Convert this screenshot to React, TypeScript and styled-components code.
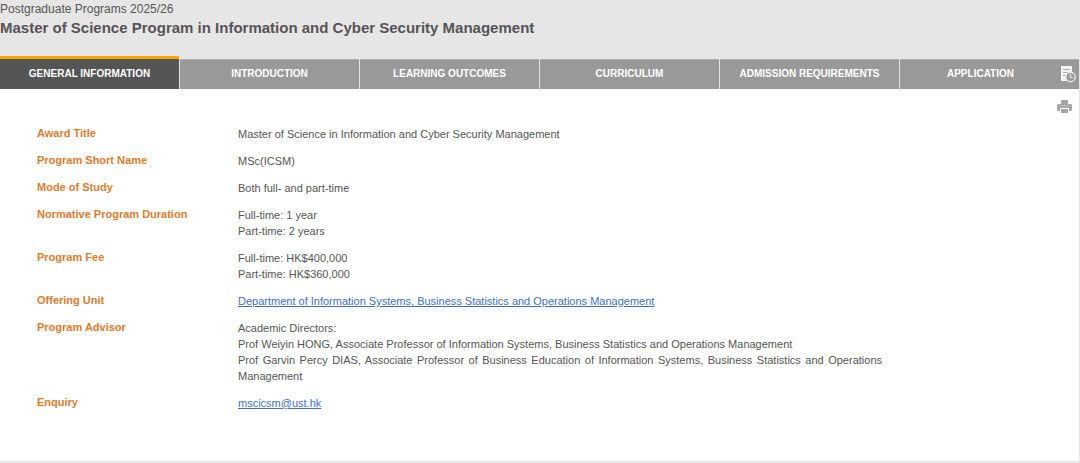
import React from "react";
import styled, { createGlobalStyle } from "styled-components";

const GlobalStyle = createGlobalStyle`
  * { box-sizing: border-box; }
  body {
    margin: 0;
    background: #e6e6e6;
    color: #555;
    font-family: "Liberation Sans", Arial, sans-serif;
    font-size: 11px;
    line-height: 16px;
  }
`;

const Header = styled.header`
  padding-bottom: 18px;
`;

const Kicker = styled.p`
  margin: 0;
  font-size: 12px;
  line-height: 18px;
`;

const Title = styled.h1`
  margin: 0;
  font-size: 15px;
  line-height: 20px;
`;

const TabBar = styled.nav`
  display: grid;
  grid-template-columns: repeat(6, 1fr);
  column-gap: 1px;
  padding-right: 1px;
`;

const Tab = styled.a<{ $active?: boolean; $withTool?: boolean }>`
  position: relative;
  display: flex;
  align-items: center;
  justify-content: center;
  height: 33px;
  padding-right: ${(p) => (p.$withTool ? "18px" : "0")};
  border-top: 3px solid ${(p) => (p.$active ? "#ffa500" : "transparent")};
  background: ${(p) => (p.$active ? "#555" : "#999")};
  background-clip: padding-box;
  box-shadow: ${(p) => (p.$active ? "none" : "inset 0 1px 0 #adadad")};
  color: #fff;
  font-size: 10px;
  font-weight: bold;
  text-decoration: none;
  text-transform: uppercase;

  &::after {
    content: "";
    display: ${(p) => (p.$active ? "block" : "none")};
    position: absolute;
    top: 100%;
    left: 50%;
    margin-left: -7px;
    border: 7px solid transparent;
    border-top-color: #555;
    border-bottom-width: 0;
  }
`;

const TabWithTool = styled.div`
  position: relative;
`;

const HistoryButton = styled.button`
  position: absolute;
  top: 9px;
  right: 3px;
  width: 17px;
  height: 18px;
  padding: 0;
  border: 0;
  background: none;
`;

const Panel = styled.main`
  position: relative;
  margin-right: 1px;
  padding: 36px 197px 50px 37px;
  background: #fff;
`;

const PrintButton = styled.button`
  position: absolute;
  top: 11px;
  right: 7px;
  width: 15px;
  height: 13px;
  padding: 0;
  border: 0;
  background: none;
`;

const Icon = styled.svg`
  display: block;
  width: 100%;
  height: 100%;
`;

const Details = styled.dl`
  display: grid;
  grid-template-columns: 201px 1fr;
  row-gap: 10px;
  margin: 0;
`;

const Label = styled.dt`
  color: #e07b2c;
  font-weight: bold;
`;

const Value = styled.dd`
  margin: 0;
  padding-top: 1px;
  text-align: justify;
`;

const Line = styled.div``;

const Link = styled.a`
  color: #3c6fd0;
  text-decoration: underline;
`;

const tabs = [
  "General Information",
  "Introduction",
  "Learning Outcomes",
  "Curriculum",
  "Admission Requirements",
];

const rows: { label: string; lines: React.ReactNode[] }[] = [
  { label: "Award Title", lines: ["Master of Science in Information and Cyber Security Management"] },
  { label: "Program Short Name", lines: ["MSc(ICSM)"] },
  { label: "Mode of Study", lines: ["Both full- and part-time"] },
  { label: "Normative Program Duration", lines: ["Full-time: 1 year", "Part-time: 2 years"] },
  { label: "Program Fee", lines: ["Full-time: HK$400,000", "Part-time: HK$360,000"] },
  {
    label: "Offering Unit",
    lines: [<Link href="#unit">Department of Information Systems, Business Statistics and Operations Management</Link>],
  },
  {
    label: "Program Advisor",
    lines: [
      "Academic Directors:",
      "Prof Weiyin HONG, Associate Professor of Information Systems, Business Statistics and Operations Management",
      "Prof Garvin Percy DIAS, Associate Professor of Business Education of Information Systems, Business Statistics and Operations Management",
    ],
  },
  { label: "Enquiry", lines: [<Link href="mailto:mscicsm@ust.hk">mscicsm@ust.hk</Link>] },
];

export default function App() {
  return (
    <>
      <GlobalStyle />
      <Header>
        <Kicker>Postgraduate Programs 2025/26</Kicker>
        <Title>Master of Science Program in Information and Cyber Security Management</Title>
      </Header>
      <TabBar>
        {tabs.map((name, i) => (
          <Tab key={name} href={`#tab-${i}`} $active={i === 0}>
            {name}
          </Tab>
        ))}
        <TabWithTool>
          <Tab href="#application" $withTool>Application</Tab>
          <HistoryButton aria-label="Program history">
            <Icon viewBox="0 0 17 18">
              <path d="M2 1h11v7H8v8H2z" fill="#f4f4f4" />
              <path d="M4 4.5h7M4 7.5h5M4 10.5h3" stroke="#aaa" />
              <circle cx="11.5" cy="12" r="4.7" fill="#999" stroke="#e3e3e3" strokeWidth="1.5" />
              <path d="M11.500 9v3.500h2.500" fill="none" stroke="#e3e3e3" strokeWidth="1.2" />
            </Icon>
          </HistoryButton>
        </TabWithTool>
      </TabBar>
      <Panel>
        <PrintButton aria-label="Print">
          <Icon viewBox="0 0 15 13">
            <path d="M4 0h7v4h3l1 1v5l-1 1h-2V8H3v3H1l-1-1V5l1-1h3z" fill="#a6a6a6" />
            <path d="M4 9h7v4H4z" fill="#a6a6a6" />
            <path d="M3 4.500V5.500H12V4.500" fill="none" stroke="#bdbdbd" />
          </Icon>
        </PrintButton>
        <Details>
          {rows.map((row) => (
            <React.Fragment key={row.label}>
              <Label>{row.label}</Label>
              <Value>
                {row.lines.map((line, i) => (
                  <Line key={i}>{line}</Line>
                ))}
              </Value>
            </React.Fragment>
          ))}
        </Details>
      </Panel>
    </>
  );
}
